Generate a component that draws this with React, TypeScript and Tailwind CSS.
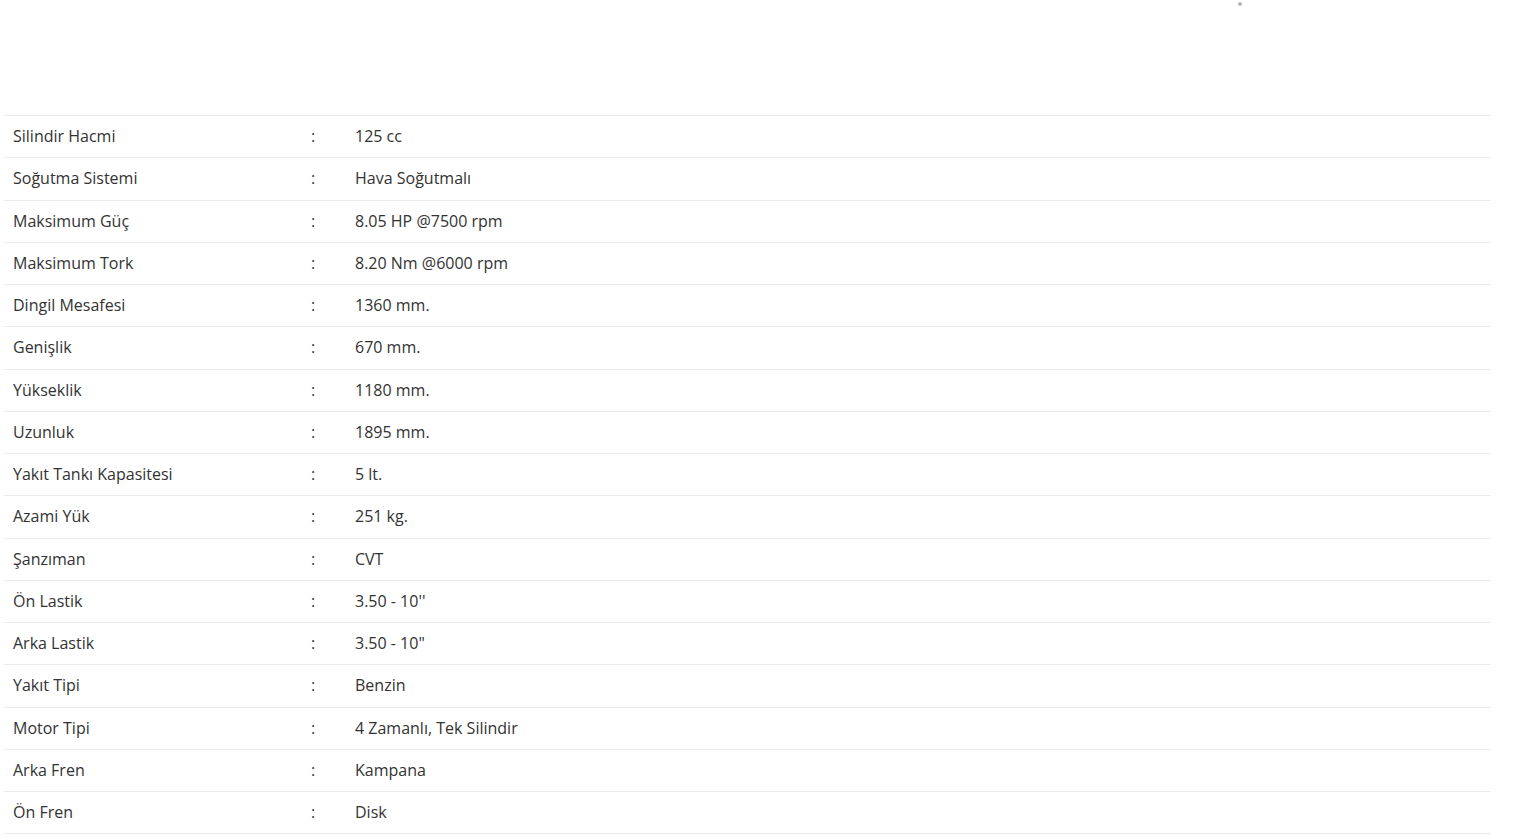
import React from "react";

const rows: [string, string][] = [
  ["Silindir Hacmi", "125 cc"],
  ["Soğutma Sistemi", "Hava Soğutmalı"],
  ["Maksimum Güç", "8.05 HP @7500 rpm"],
  ["Maksimum Tork", "8.20 Nm @6000 rpm"],
  ["Dingil Mesafesi", "1360 mm."],
  ["Genişlik", "670 mm."],
  ["Yükseklik", "1180 mm."],
  ["Uzunluk", "1895 mm."],
  ["Yakıt Tankı Kapasitesi", "5 lt."],
  ["Azami Yük", "251 kg."],
  ["Şanzıman", "CVT"],
  ["Ön Lastik", "3.50 - 10''"],
  ["Arka Lastik", "3.50 - 10\""],
  ["Yakıt Tipi", "Benzin"],
  ["Motor Tipi", "4 Zamanlı, Tek Silindir"],
  ["Arka Fren", "Kampana"],
  ["Ön Fren", "Disk"],
];

export default function App() {
  return (
    <div
      className="w-[1513px] h-[837px] overflow-hidden bg-white text-[#333333]"
      style={{ fontFamily: '"Open Sans", "Noto Sans", sans-serif' }}
    >
      <div className="h-[115px] pl-[1238px] pt-[2px]">
        <div className="w-[4px] h-[4px] rounded-full bg-[#b5b5b5]" />
      </div>
      <div className="ml-[4px] w-[1487px] flex flex-col">
        {rows.map(([k, v], i) => (
          <div
            key={i}
            className="h-[42.25px] border-t border-[#ebebeb] flex items-center text-[16px] leading-[20px] pl-[9px] pb-[1px]"
          >
            <div className="w-[298px]">{k}</div>
            <div className="w-[44px]">:</div>
            <div>{v}</div>
          </div>
        ))}
        <div className="border-t border-[#ebebeb]" />
      </div>
    </div>
  );
}
